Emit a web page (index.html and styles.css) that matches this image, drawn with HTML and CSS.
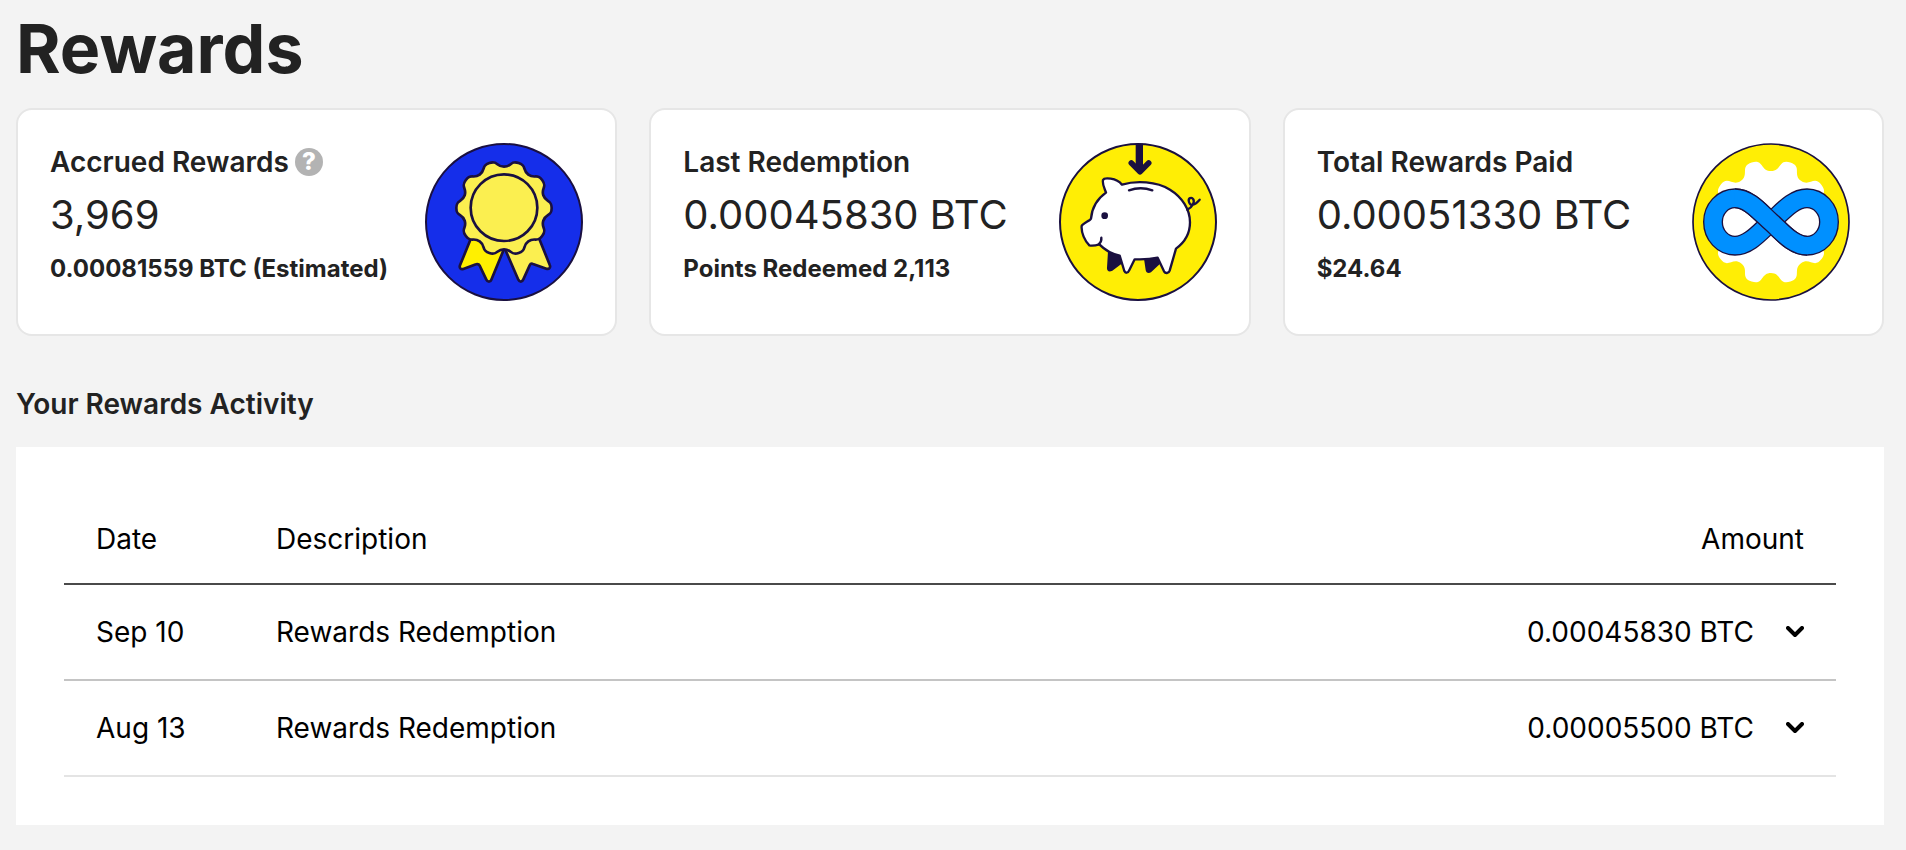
FILE: index.html
```html
<!DOCTYPE html>
<html lang="en">
<head>
    <meta charset="UTF-8">
    <meta name="viewport" content="width=device-width, initial-scale=1.0">
    <title>Rewards</title>
    <link rel="stylesheet" href="styles.css">
</head>
<body>
    <main class="page">
        <h1>Rewards</h1>

        <section class="cards">
            <div class="card">
                <div class="card-text">
                    <h2>Accrued Rewards <button class="help" type="button">?</button></h2>
                    <p class="value">3,969</p>
                    <p class="note">0.00081559 BTC (Estimated)</p>
                </div>
                <!-- ribbon -->
                <svg class="card-icon" viewBox="30 39 474 474" aria-hidden="true">
                    <circle cx="267" cy="276" r="234" fill="#152eea" stroke="#1a1040" stroke-width="6"/>
                    <g stroke="#1a1040" stroke-width="8" stroke-linejoin="round">
                        <path fill="#fff000" d="M168 325L135 406C132 414 137 419 145 417L183 403C188 401 192 403 194 407L214 449C218 457 226 457 229 449L267 357L220 320Z"/>
                        <path fill="#fbef50" d="M372 325L404 404C408 413 402 419 394 416L354 402C349 400 346 402 344 406L325 448C321 457 314 457 310 449L270 357L320 320Z"/>
                        <path fill="#fbef50" transform="translate(267 234)" d="M0 -124C24 -124 18.2 -143.3 43.9 -135C69.6 -126.7 53.5 -114.4 72.9 -100.3C92.3 -86.2 99 -105.3 114.9 -83.5C130.8 -61.7 110.5 -61.1 117.9 -38.3C125.3 -15.5 143 -27 143 0C143 27 125.3 15.5 117.9 38.3C110.5 61.1 130.8 61.7 114.9 83.5C99 105.3 92.3 86.2 72.9 100.3C53.5 114.4 69.6 126.7 43.9 135C18.2 143.3 24 124 0 124C-24 124 -18.2 143.3 -43.9 135C-69.6 126.7 -53.5 114.4 -72.9 100.3C-92.3 86.2 -99 105.3 -114.9 83.5C-130.8 61.7 -110.5 61.1 -117.9 38.3C-125.3 15.5 -143 27 -143 0C-143 -27 -125.3 -15.5 -117.9 -38.3C-110.5 -61.1 -130.8 -61.7 -114.9 -83.5C-99 -105.3 -92.3 -86.2 -72.9 -100.3C-53.5 -114.4 -69.6 -126.7 -43.9 -135C-18.2 -143.3 -24 -124 0 -124Z"/>
                        <circle cx="267" cy="233" r="100" fill="#fbef50"/>
                    </g>
                </svg>
            </div>

            <div class="card">
                <div class="card-text">
                    <h2>Last Redemption</h2>
                    <p class="value">0.00045830 BTC</p>
                    <p class="note">Points Redeemed 2,113</p>
                </div>
                <!-- piggy bank -->
                <svg class="card-icon" viewBox="30 39 474 474" aria-hidden="true">
                    <circle cx="267" cy="276" r="234" fill="#ffee05" stroke="#1a1040" stroke-width="6"/>
                    <path fill="#1a1040" d="M260 41H282V115H260Z"/>
                    <path fill="none" stroke="#1a1040" stroke-width="17" stroke-linecap="round" stroke-linejoin="round" d="M247 99L273 125L299 99"/>
                    <path fill="#1a1040" d="M177 364L212 375L220 400L190 422C180 427 173 423 174 413Z"/>
                    <path fill="#1a1040" d="M285 386L327 379L335 400L306 427C298 432 291 428 290 420Z"/>
                    <g fill="none" stroke="#1a1040" stroke-width="7" stroke-linecap="round" stroke-linejoin="round">
                        <path fill="#fff" d="M126 266C129 232 148 204 171 188C168 178 159 164 162 150C165 142 202 142 219 164C262 151 322 154 363 179C399 201 423 238 423 277C423 311 406 338 381 356L362 422C359 431 349 431 345 424L326 383C304 388 280 389 257 388L240 422C237 430 229 430 226 423L212 377C189 372 168 360 151 343C141 346 132 348 121 346C108 334 96 308 98 288C101 280 124 272 126 266Z"/>
                        <path d="M149 343C155 338 158 331 157 323"/>
                        <path d="M240 181C262 173 288 173 310 181"/>
                        <path d="M415 239C431 232 437 215 433 208C428 200 416 204 420 216C424 230 437 226 452 209"/>
                    </g>
                    <circle cx="167" cy="257" r="10" fill="#1a1040"/>
                </svg>
            </div>

            <div class="card">
                <div class="card-text">
                    <h2>Total Rewards Paid</h2>
                    <p class="value">0.00051330 BTC</p>
                    <p class="note">$24.64</p>
                </div>
                <!-- infinity loop -->
                <svg class="card-icon" viewBox="33 39 474 474" aria-hidden="true">
                    <circle cx="270" cy="276" r="234" fill="#ffee05" stroke="#1a1040" stroke-width="5"/>
                    <path fill="#fff" transform="translate(270 276)" d="M0 -153C32 -153 22 -190.5 58.1 -178.8C94.2 -167.1 64.1 -142.6 90 -123.8C115.9 -105 129.8 -141.2 152.1 -110.5C174.4 -79.8 135.6 -77.7 145.5 -47.3V47.3C135.6 77.7 174.4 79.8 152.1 110.5C129.8 141.2 115.9 105 90 123.8C64.1 142.6 94.2 167.1 58.1 178.8C22 190.5 32 153 0 153C-32 153 -22 190.5 -58.1 178.8C-94.2 167.1 -64.1 142.6 -90 123.8C-115.9 105 -129.8 141.2 -152.1 110.5C-174.4 79.8 -135.6 77.7 -145.5 47.3V-47.3C-135.6 -77.7 -174.4 -79.8 -152.1 -110.5C-129.8 -141.2 -115.9 -105 -90 -123.8C-64.1 -142.6 -94.2 -167.1 -58.1 -178.8C-22 -190.5 -32 -153 0 -153Z"/>
                    <g fill="none">
                        <path stroke="#1a1040" stroke-width="60" d="M162 205C205 205 240 250 270 276S335 347 378 347A66 71 0 0 0 378 205C335 205 300 250 270 276S205 347 162 347A66 71 0 0 1 162 205Z"/>
                        <path stroke="#0090ff" stroke-width="52" d="M162 205C205 205 240 250 270 276S335 347 378 347A66 71 0 0 0 378 205C335 205 300 250 270 276S205 347 162 347A66 71 0 0 1 162 205Z"/>
                        <path stroke="#1a1040" stroke-width="60" d="M162 205C205 205 240 250 270 276S335 347 378 347"/>
                        <path stroke="#0090ff" stroke-width="52" d="M160 205H162C205 205 240 250 270 276S335 347 378 347H380"/>
                    </g>
                </svg>
            </div>
        </section>

        <h2 class="activity-title">Your Rewards Activity</h2>
        <section class="activity">
            <table>
                <thead>
                    <tr>
                        <th class="date">Date</th>
                        <th>Description</th>
                        <th class="amount">Amount</th>
                    </tr>
                </thead>
                <tbody>
                    <tr>
                        <td>Sep 10</td>
                        <td>Rewards Redemption</td>
                        <td class="amount">
                            <div class="amount-cell">
                                0.00045830 BTC
                                <button class="toggle" type="button" aria-label="Show details">
                                    <svg viewBox="0 0 18 12" aria-hidden="true"><path d="M2 2L9 9L16 2"/></svg>
                                </button>
                            </div>
                        </td>
                    </tr>
                    <tr>
                        <td>Aug 13</td>
                        <td>Rewards Redemption</td>
                        <td class="amount">
                            <div class="amount-cell">
                                0.00005500 BTC
                                <button class="toggle" type="button" aria-label="Show details">
                                    <svg viewBox="0 0 18 12" aria-hidden="true"><path d="M2 2L9 9L16 2"/></svg>
                                </button>
                            </div>
                        </td>
                    </tr>
                </tbody>
            </table>
        </section>
    </main>
</body>
</html>
```

FILE: styles.css
```css
* {
    box-sizing: border-box;
}
body {
    font-family: Inter, "Liberation Sans", sans-serif;
    margin: 0;
    background-color: #f3f3f3;
    color: #222;
}
.page {
    padding: 8px 22px 16px 16px;
}
h1, h2, p {
    margin: 0;
}
h1 {
    font-size: 68px;
    line-height: 80px;
    font-weight: 700;
    margin-bottom: 20px;
}
.cards {
    display: grid;
    grid-template-columns: repeat(3, 1fr);
    gap: 32px;
}
.card {
    display: flex;
    justify-content: space-between;
    align-items: flex-start;
    background: #fff;
    padding: 32px;
    border: 2px solid #e6e6e6;
    border-radius: 16px;
}
.card-text {
    min-height: 160px;
    white-space: nowrap;
}
.card h2 {
    display: flex;
    align-items: center;
    gap: 6px;
    font-size: 28px;
    line-height: 40px;
    font-weight: 600;
}
.value {
    font-size: 40px;
    line-height: 66px;
}
.note {
    font-size: 24px;
    line-height: 42px;
    font-weight: 700;
}
.card-icon {
    width: 158px;
    height: 158px;
    flex: none;
    margin-top: 1px;
}
.help {
    width: 28px;
    height: 28px;
    padding: 0;
    border: none;
    border-radius: 50%;
    background: #b3b3b3;
    color: #fff;
    font-family: inherit;
    font-size: 24px;
    line-height: 28px;
    font-weight: 800;
    cursor: pointer;
}
.activity-title {
    font-size: 28px;
    line-height: 40px;
    font-weight: 600;
    margin: 48px 0 23px;
}
.activity {
    background: #fff;
    padding: 48px;
    color: #000;
}
table {
    width: 100%;
    border-spacing: 0;
    font-size: 28px;
    line-height: 36px;
}
th, td {
    height: 96px;
    padding: 0 32px;
    text-align: left;
    font-weight: 400;
    border-bottom: 2px solid #c4c4c4;
}
th {
    height: 90px;
    border-bottom-color: #4a4a4a;
}
tbody tr:last-child td {
    border-bottom-color: #e4e4e4;
}
.date {
    width: 180px;
}
.amount {
    text-align: right;
}
.amount-cell {
    display: flex;
    justify-content: flex-end;
    align-items: center;
    gap: 32px;
}
.toggle {
    display: flex;
    padding: 0;
    border: none;
    background: none;
    cursor: pointer;
}
.toggle svg {
    width: 18px;
    height: 12px;
    fill: none;
    stroke: #000;
    stroke-width: 4;
    stroke-linecap: round;
    stroke-linejoin: round;
}
```
